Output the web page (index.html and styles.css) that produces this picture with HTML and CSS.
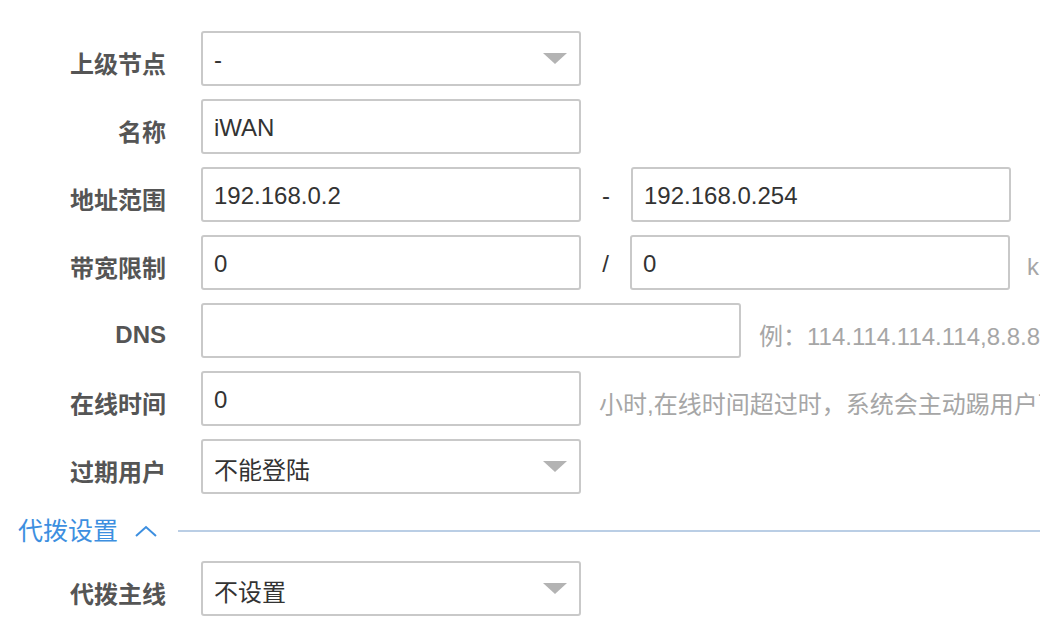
FILE: index.html
```html
<!DOCTYPE html>
<html lang="zh-CN">
<head>
<meta charset="utf-8">
<title>节点设置</title>
<link rel="stylesheet" href="styles.css">
</head>
<body>
<div class="form">
  <div class="row">
    <div class="label">上级节点</div>
    <div class="box select w380"><span>-</span><span class="caret"></span></div>
  </div>
  <div class="row">
    <div class="label">名称</div>
    <div class="box w380"><span>iWAN</span></div>
  </div>
  <div class="row">
    <div class="label">地址范围</div>
    <div class="box w380"><span>192.168.0.2</span></div>
    <div class="sep">-</div>
    <div class="box w380"><span>192.168.0.254</span></div>
  </div>
  <div class="row">
    <div class="label">带宽限制</div>
    <div class="box w380"><span>0</span></div>
    <div class="sep sep-slash">/</div>
    <div class="box w380"><span>0</span></div>
    <div class="help help-unit">kbps</div>
  </div>
  <div class="row">
    <div class="label">DNS</div>
    <div class="box w540"></div>
    <div class="help">例：114.114.114.114,8.8.8.8</div>
  </div>
  <div class="row">
    <div class="label">在线时间</div>
    <div class="box w380"><span>0</span></div>
    <div class="help">小时,在线时间超过时，系统会主动踢用户下线</div>
  </div>
  <div class="row">
    <div class="label">过期用户</div>
    <div class="box select w380"><span>不能登陆</span><span class="caret"></span></div>
  </div>
  <div class="section-head">
    <span class="section-title">代拨设置</span>
    <svg class="chevron" width="22" height="12" viewBox="0 0 22 12"><path d="M1 11 L11 2 L21 11" fill="none" stroke="#3d8fe0" stroke-width="2"/></svg>
    <span class="section-line"></span>
  </div>
  <div class="row">
    <div class="label">代拨主线</div>
    <div class="box select w380"><span>不设置</span><span class="caret"></span></div>
  </div>
</div>
</body>
</html>
```
FILE: styles.css
```css
html, body {
  margin: 0;
  padding: 0;
  background: #ffffff;
  overflow: hidden;
}
body {
  width: 1040px;
  height: 638px;
  font-family: "Liberation Sans", "Noto Sans CJK SC", sans-serif;
  font-size: 24px;
  color: #333333;
}
.form {
  padding-top: 31px;
  white-space: nowrap;
}
.row {
  display: flex;
  align-items: center;
  height: 55px;
  margin-bottom: 13px;
}
.label {
  flex: 0 0 166px;
  width: 166px;
  margin-right: 35px;
  padding-top: 8px;
  text-align: right;
  font-weight: bold;
  color: #555555;
}
.box {
  box-sizing: border-box;
  height: 55px;
  flex: 0 0 auto;
  border: 2px solid #c9c9c9;
  border-radius: 3px;
  display: flex;
  align-items: center;
  justify-content: space-between;
  padding: 3px 12px 0 11px;
  color: #333333;
}
.w380 { width: 380px; }
.w540 { width: 540px; }
.caret {
  width: 0;
  height: 0;
  margin-top: -3px;
  border-left: 12px solid transparent;
  border-right: 12px solid transparent;
  border-top: 11px solid #b3b3b3;
}
.sep {
  flex: 0 0 50px;
  width: 50px;
  padding-top: 3px;
  text-align: center;
  color: #333333;
}
.sep-slash {
  flex-basis: 49px;
  width: 49px;
}
.help {
  margin-left: 18px;
  padding-top: 8px;
  color: #a6a6a6;
  flex: 0 0 auto;
}
.help-unit {
  margin-left: 17px;
}
.section-head {
  display: flex;
  align-items: center;
  height: 24px;
  margin-top: 25px;
  margin-bottom: 18px;
  padding-left: 18px;
}
.section-title {
  color: #3d8fe0;
  font-size: 25px;
  line-height: 24px;
}
.chevron {
  margin-left: 17px;
  flex: 0 0 auto;
}
.section-line {
  flex: 1 1 auto;
  height: 2px;
  margin-left: 21px;
  background: #bacee5;
}
```
